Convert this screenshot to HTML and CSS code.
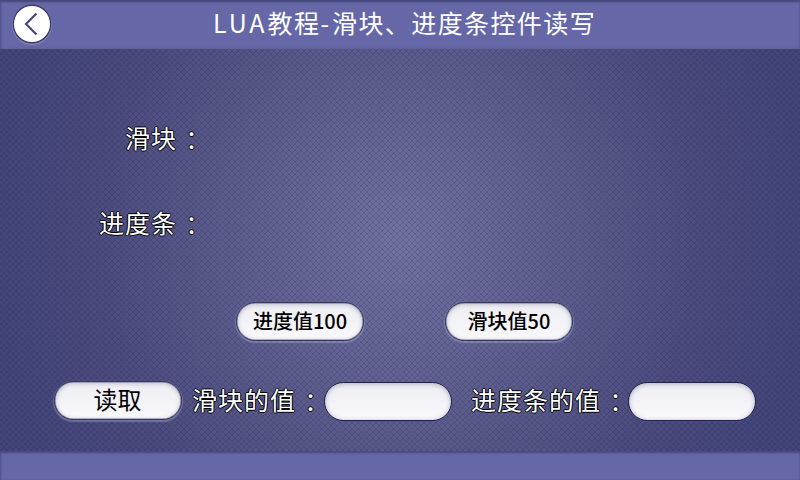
FILE: index.html
```html
<!DOCTYPE html>
<html lang="zh-CN">
<head>
<meta charset="utf-8">
<title>LUA教程-滑块、进度条控件读写</title>
<link rel="stylesheet" href="styles.css">
</head>
<body>
<div class="screen">
  <header class="topbar">
    <button class="back" aria-label="返回">
      <svg width="42" height="42" viewBox="0 0 42 42">
        <circle cx="21" cy="22" r="19.5" fill="none" stroke="#a3a4c9" stroke-opacity=".65"/>
        <circle cx="21" cy="21" r="18.7" fill="#fff" stroke="#3d3c68" stroke-width="1.4"/>
        <path d="M25.5 10.5 15 21l10.5 10.5" fill="none" stroke="#46467c" stroke-width="2.2"/>
      </svg>
    </button>
    <h1 class="title"><span class="latin">LUA</span>教程<span class="latin">-</span>滑块、进度条控件读写</h1>
  </header>
  <main class="content">
    <div class="label slider-label">滑块<span class="colon" lang="zh-TW">：</span></div>
    <div class="label progress-label">进度条<span class="colon" lang="zh-TW">：</span></div>
    <div class="actions">
      <button class="pill">进度值100</button>
      <button class="pill">滑块值50</button>
    </div>
    <div class="readout">
      <button class="pill read">读取</button>
      <div class="label first">滑块的值<span class="colon" lang="zh-TW">：</span></div>
      <div class="pill field"></div>
      <div class="label second">进度条的值<span class="colon" lang="zh-TW">：</span></div>
      <div class="pill field"></div>
    </div>
  </main>
  <footer class="bottombar"></footer>
</div>
</body>
</html>
```
FILE: styles.css
```css
* { box-sizing: border-box; }
body {
  margin: 0;
  font-family: "Noto Sans CJK SC", sans-serif;
}
button { font: inherit; padding: 0; border: 0; background: none; }
.screen {
  width: 800px;
  height: 480px;
  display: flex;
  flex-direction: column;
  overflow: hidden;
  background:
    repeating-linear-gradient(45deg, rgba(20, 20, 65, .17) 0 1.1px, transparent 1.1px 4.243px),
    repeating-linear-gradient(-45deg, rgba(20, 20, 65, .17) 0 1.1px, transparent 1.1px 4.243px),
    radial-gradient(ellipse 410px 430px at 400px 240px, #7172a0 0%, #5d5e8e 40%, #4b4c7d 75%, #434579 100%);
}
.topbar {
  height: 49px;
  flex: none;
  display: flex;
  align-items: flex-start;
  background: #6567a6;
  box-shadow: inset 0 2px 2px #46477a, inset 1px 0 2px #555690;
}
.back { width: 42px; height: 42px; margin: 3px 0 0 11px; }
.back svg { display: block; }
.title {
  margin: 4px 0 0 160px;
  font-size: 25px;
  line-height: 36px;
  font-weight: 400;
  letter-spacing: 1.4px;
  color: #fff;
  white-space: nowrap;
}
.latin { letter-spacing: 3px; }
.content { flex: 1; min-height: 0; }
.label {
  height: 36px;
  font-size: 25px;
  line-height: 36px;
  letter-spacing: 1px;
  white-space: nowrap;
  color: #fff;
  text-shadow: 1px 0 #000, -1px 0 #000, 0 1px #000, 0 -1px #000;
}
.colon {
  font-family: "Noto Sans CJK TC", sans-serif;
  line-height: 1;
  margin-left: 2px;
  vertical-align: -2px;
}
.slider-label { margin: 70px 0 0 125px; }
.progress-label { margin: 49px 0 0 99px; }
.actions {
  display: flex;
  gap: 81px;
  margin: 62px 0 0 236px;
}
.pill {
  width: 128px;
  height: 39px;
  flex: none;
  border: 1.5px solid #37375f;
  border-radius: 20px;
  background: linear-gradient(#eeeef3, #f3f3f7 50%, #fafafc);
  box-shadow: inset 0 0 0 .5px #77779a, inset 0 1px 5px #b0b0c4, 0 1px 1px 1px rgba(175, 177, 208, .4);
  font-size: 20px;
  font-weight: 500;
  line-height: 33px;
  padding-bottom: 2px;
  color: #000;
  text-align: center;
}
.readout {
  display: flex;
  margin: 40px 0 0 54px;
}
.read { font-size: 24px; font-weight: 400; padding: 0 1px 5px 0; }
.field {
  margin-top: 1px;
  border-color: #20204f;
  box-shadow: inset 0 1px 5px #aeaec0, 0 1px 1px rgba(80, 82, 150, .6);
}
.first { width: 132px; margin-left: 10px; }
.second { width: 157px; margin-left: 19px; }
.bottombar {
  height: 29px;
  flex: none;
  background: #6567a6;
  box-shadow: inset 0 2px 2px #494a80, inset 1px 0 2px #555690;
}
```
